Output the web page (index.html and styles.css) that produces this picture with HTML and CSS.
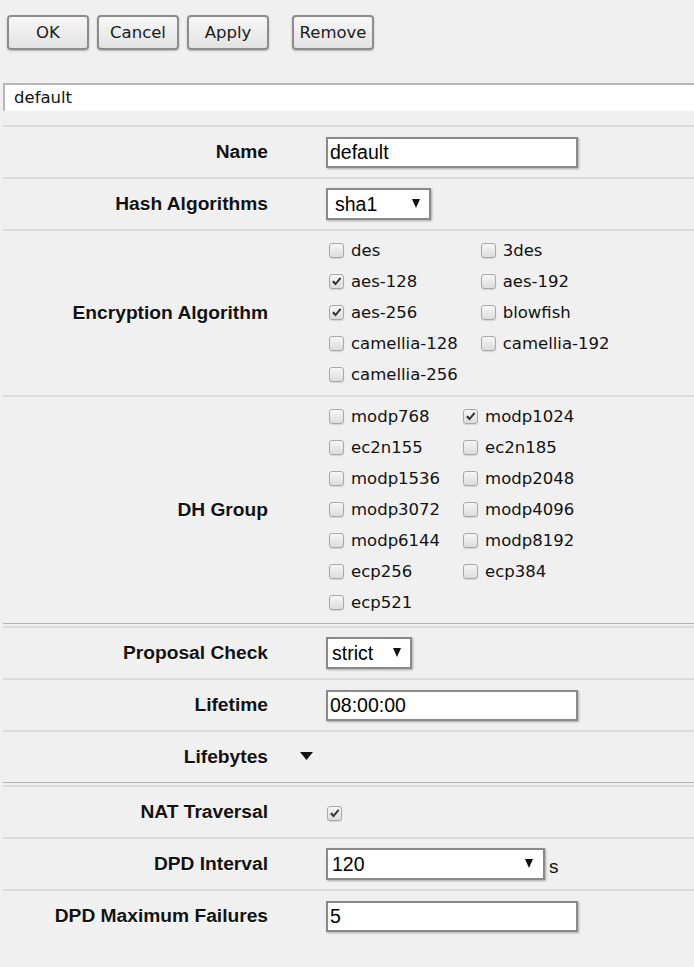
FILE: index.html
```html
<!DOCTYPE html>
<html>
<head>
<meta charset="utf-8">
<link rel="stylesheet" href="styles.css">
</head>
<body>
<div class="toolbar">
  <button class="btn">OK</button>
  <button class="btn">Cancel</button>
  <button class="btn">Apply</button>
  <button class="btn btn-remove">Remove</button>
</div>
<div class="path">default</div>

<div class="form">
  <div class="row">
    <div class="label">Name</div>
    <div class="value"><div class="input">default</div></div>
  </div>
  <div class="row">
    <div class="label">Hash Algorithms</div>
    <div class="value"><div class="select sel-sha"><span>sha1</span><svg class="arrow" viewBox="0 0 8 9"><polygon points="0,0 8,0 4,9" fill="#111"/></svg></div></div>
  </div>
  <div class="row row-checks">
    <div class="label">Encryption Algorithm</div>
    <div class="value">
      <div class="checks">
        <div class="cb"><span class="box"></span>des</div>
        <div class="cb"><span class="box"></span>3des</div>
        <div class="cb"><span class="box checked"><svg viewBox="0 0 14 14"><path d="M2.2 7.6 L4.2 5.8 L6 8 L10.6 2.4 L12.3 3.9 L6 11.4 Z" fill="#333"/></svg></span>aes-128</div>
        <div class="cb"><span class="box"></span>aes-192</div>
        <div class="cb"><span class="box checked"><svg viewBox="0 0 14 14"><path d="M2.2 7.6 L4.2 5.8 L6 8 L10.6 2.4 L12.3 3.9 L6 11.4 Z" fill="#333"/></svg></span>aes-256</div>
        <div class="cb"><span class="box"></span>blowfish</div>
        <div class="cb"><span class="box"></span>camellia-128</div>
        <div class="cb"><span class="box"></span>camellia-192</div>
        <div class="cb"><span class="box"></span>camellia-256</div>
      </div>
    </div>
  </div>
  <div class="row row-checks row-dh">
    <div class="label">DH Group</div>
    <div class="value">
      <div class="checks">
        <div class="cb"><span class="box"></span>modp768</div>
        <div class="cb"><span class="box checked"><svg viewBox="0 0 14 14"><path d="M2.2 7.6 L4.2 5.8 L6 8 L10.6 2.4 L12.3 3.9 L6 11.4 Z" fill="#333"/></svg></span>modp1024</div>
        <div class="cb"><span class="box"></span>ec2n155</div>
        <div class="cb"><span class="box"></span>ec2n185</div>
        <div class="cb"><span class="box"></span>modp1536</div>
        <div class="cb"><span class="box"></span>modp2048</div>
        <div class="cb"><span class="box"></span>modp3072</div>
        <div class="cb"><span class="box"></span>modp4096</div>
        <div class="cb"><span class="box"></span>modp6144</div>
        <div class="cb"><span class="box"></span>modp8192</div>
        <div class="cb"><span class="box"></span>ecp256</div>
        <div class="cb"><span class="box"></span>ecp384</div>
        <div class="cb"><span class="box"></span>ecp521</div>
      </div>
    </div>
  </div>
  <div class="sep"></div>
  <div class="row">
    <div class="label">Proposal Check</div>
    <div class="value"><div class="select sel-strict"><span>strict</span><svg class="arrow" viewBox="0 0 8 9"><polygon points="0,0 8,0 4,9" fill="#111"/></svg></div></div>
  </div>
  <div class="row">
    <div class="label">Lifetime</div>
    <div class="value"><div class="input">08:00:00</div></div>
  </div>
  <div class="row row-toggle">
    <div class="label">Lifebytes</div>
    <div class="value"><svg class="toggle" viewBox="0 0 13 8"><polygon points="0,0 13,0 6.5,8" fill="#111"/></svg></div>
  </div>
  <div class="sep"></div>
  <div class="row">
    <div class="label">NAT Traversal</div>
    <div class="value"><span class="box checked nat"><svg viewBox="0 0 14 14"><path d="M2.2 7.6 L4.2 5.8 L6 8 L10.6 2.4 L12.3 3.9 L6 11.4 Z" fill="#333"/></svg></span></div>
  </div>
  <div class="row">
    <div class="label">DPD Interval</div>
    <div class="value"><div class="select sel-dpd"><span>120</span><svg class="arrow" viewBox="0 0 8 9"><polygon points="0,0 8,0 4,9" fill="#111"/></svg></div><span class="unit">s</span></div>
  </div>
  <div class="row">
    <div class="label">DPD Maximum Failures</div>
    <div class="value"><div class="input">5</div></div>
  </div>
</div>
</body>
</html>
```

FILE: styles.css
```css
html, body {
  margin: 0;
  padding: 0;
  background: #f0f0f0;
}
body {
  font-family: "DejaVu Sans", Verdana, sans-serif;
  color: #111;
  overflow: hidden;
}
.toolbar {
  display: flex;
  gap: 8px;
  padding: 15px 0 0 7px;
}
.btn {
  width: 82px;
  height: 35px;
  border: 2px solid #8c8c8c;
  border-radius: 4px;
  background: linear-gradient(#f7f7f7, #e2e2e2);
  box-shadow: 0 1px 2px rgba(0,0,0,0.25);
  font-family: "DejaVu Sans", Verdana, sans-serif;
  font-size: 16.5px;
  color: #1a1a1a;
  padding: 0;
}
.btn-remove {
  margin-left: 15px;
}
.path {
  margin: 33px 0 0 3px;
  height: 26px;
  background: #fff;
  border-top: 2px solid #b8b8b8;
  border-left: 2px solid #b8b8b8;
  font-size: 16.5px;
  line-height: 26px;
  padding-left: 9px;
  color: #111;
}
.form {
  margin: 14px 0 0 3px;
}
.row {
  display: grid;
  grid-template-columns: 265px 1fr;
  align-items: center;
  min-height: 50px;
  border-top: 2px solid #dcdcdc;
}
.label {
  text-align: right;
  font-family: "Liberation Sans", Arial, sans-serif;
  font-weight: bold;
  font-size: 19.2px;
  color: #111;
  text-shadow: 0 1px 0 #fff;
}
.value {
  display: flex;
  align-items: center;
  padding-left: 58px;
}
.input {
  box-sizing: border-box;
  width: 252px;
  height: 31px;
  background: #fff;
  border: 2px solid #8a8a8a;
  box-shadow: 1px 1px 2px rgba(0,0,0,0.3);
  font-family: "Liberation Sans", Arial, sans-serif;
  font-size: 19.5px;
  line-height: 27px;
  padding-left: 2px;
  color: #000;
}
.select {
  box-sizing: border-box;
  display: flex;
  align-items: center;
  justify-content: space-between;
  height: 32px;
  background: #fff;
  border: 2px solid #8a8a8a;
  box-shadow: 1px 1px 2px rgba(0,0,0,0.3);
  font-family: "Liberation Sans", Arial, sans-serif;
  font-size: 19.5px;
  color: #000;
  padding: 0 9px 0 7px;
}
.sel-sha { width: 105px; }
.sel-strict { width: 86px; padding-left: 4px; }
.sel-dpd { width: 219px; padding-left: 4px; padding-right: 10px; }
.arrow {
  width: 8px;
  height: 9px;
  margin-top: -2px;
}
.unit {
  font-family: "Liberation Sans", Arial, sans-serif;
  font-size: 19px;
  margin-left: 4px;
  margin-top: 6px;
}
.row-checks {
  padding: 4px 0 5px;
}
.checks {
  display: grid;
  grid-template-columns: auto auto;
  column-gap: 23px;
  justify-content: start;
  margin-left: 3px;
}
.cb {
  display: flex;
  align-items: center;
  height: 31px;
  font-size: 16.5px;
  color: #111;
}
.box {
  box-sizing: border-box;
  display: inline-flex;
  align-items: center;
  justify-content: center;
  width: 15px;
  height: 15px;
  border: 1px solid #a8a8a8;
  border-radius: 3px;
  background: linear-gradient(#f6f6f6, #dcdcdc);
  box-shadow: 0 1px 1px rgba(0,0,0,0.12);
  margin-right: 7px;
  flex: none;
}
.box svg {
  width: 13px;
  height: 13px;
}
.box.nat {
  margin-left: 1px;
  margin-top: 2px;
}
.sep {
  border-top: 1px solid #b4b4b4;
  margin-bottom: 2px;
}
.row-toggle .value {
  padding-left: 32px;
}
.toggle {
  width: 13px;
  height: 8px;
  margin-top: -2px;
}
```
